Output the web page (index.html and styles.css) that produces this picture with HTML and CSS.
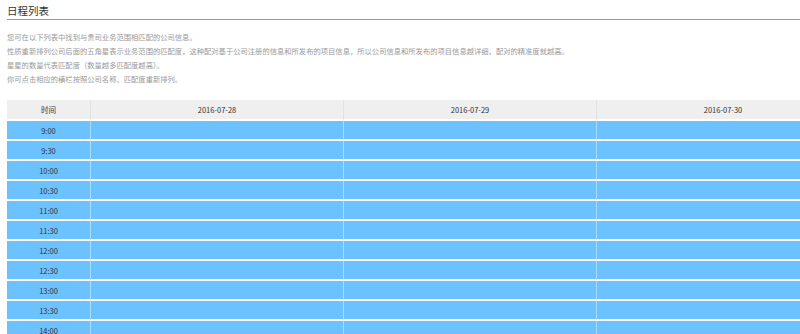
FILE: index.html
```html
<!DOCTYPE html>
<html lang="zh-CN">
<head>
<meta charset="utf-8">
<title>日程列表</title>
<link rel="stylesheet" href="styles.css">
</head>
<body>
<div class="page">
  <h2 class="title">日程列表</h2>
  <div class="desc">
    <p>您可在以下列表中找到与贵司业务范围相匹配的公司信息。</p>
    <p>性质重新排列公司后面的五角星表示业务范围的匹配度，这种配对基于公司注册的信息和所发布的项目信息，所以公司信息和所发布的项目信息越详细，配对的精准度就越高。</p>
    <p>星星的数量代表匹配度（数量越多匹配度越高）。</p>
    <p>你可点击相应的横栏按照公司名称、匹配度重新排列。</p>
  </div>
  <table class="schedule">
    <thead>
      <tr><th class="c-time">时间</th><th>2016-07-28</th><th>2016-07-29</th><th>2016-07-30</th></tr>
    </thead>
    <tbody>
      <tr><td class="c-time">9:00</td><td></td><td></td><td></td></tr>
      <tr><td class="c-time">9:30</td><td></td><td></td><td></td></tr>
      <tr><td class="c-time">10:00</td><td></td><td></td><td></td></tr>
      <tr><td class="c-time">10:30</td><td></td><td></td><td></td></tr>
      <tr><td class="c-time">11:00</td><td></td><td></td><td></td></tr>
      <tr><td class="c-time">11:30</td><td></td><td></td><td></td></tr>
      <tr><td class="c-time">12:00</td><td></td><td></td><td></td></tr>
      <tr><td class="c-time">12:30</td><td></td><td></td><td></td></tr>
      <tr><td class="c-time">13:00</td><td></td><td></td><td></td></tr>
      <tr><td class="c-time">13:30</td><td></td><td></td><td></td></tr>
      <tr><td class="c-time">14:00</td><td></td><td></td><td></td></tr>
      <tr><td class="c-time">14:30</td><td></td><td></td><td></td></tr>
    </tbody>
  </table>
</div>
</body>
</html>
```

FILE: styles.css
```css
html, body {
  margin: 0;
  padding: 0;
  background: #fff;
  overflow: hidden;
}
body {
  font-family: "Noto Sans CJK SC", "Noto Sans", sans-serif;
  color: #333;
}
.page {
  padding: 4px 0 0 7px;
}
.title {
  margin: 0;
  font-size: 10.5px;
  font-weight: normal;
  line-height: 14px;
  color: #333;
  padding-bottom: 1px;
  border-bottom: 1px solid #5aa9e6;
}
.desc {
  margin-top: 10px;
  color: #999;
  font-size: 7.3px;
  line-height: 14px;
}
.desc p {
  margin: 0;
  white-space: nowrap;
}
.schedule {
  margin-top: 14px;
  border-collapse: separate;
  border-spacing: 0;
  table-layout: fixed;
  width: 843px;
  font-size: 7.5px;
  color: #333;
}
.schedule th {
  height: 19px;
  padding: 0;
  font-weight: normal;
  background: #efefef;
  border-bottom: 2px solid #fff;
  border-right: 1px solid #e2e2e2;
  text-align: center;
  width: 252px;
}
.schedule th.c-time,
.schedule td.c-time {
  width: 83px;
}
.schedule td {
  height: 18px;
  padding: 0;
  background: #6cc2fe;
  border-bottom: 2px solid #fff;
  border-right: 1px solid #a9dbff;
  text-align: center;
}
```
